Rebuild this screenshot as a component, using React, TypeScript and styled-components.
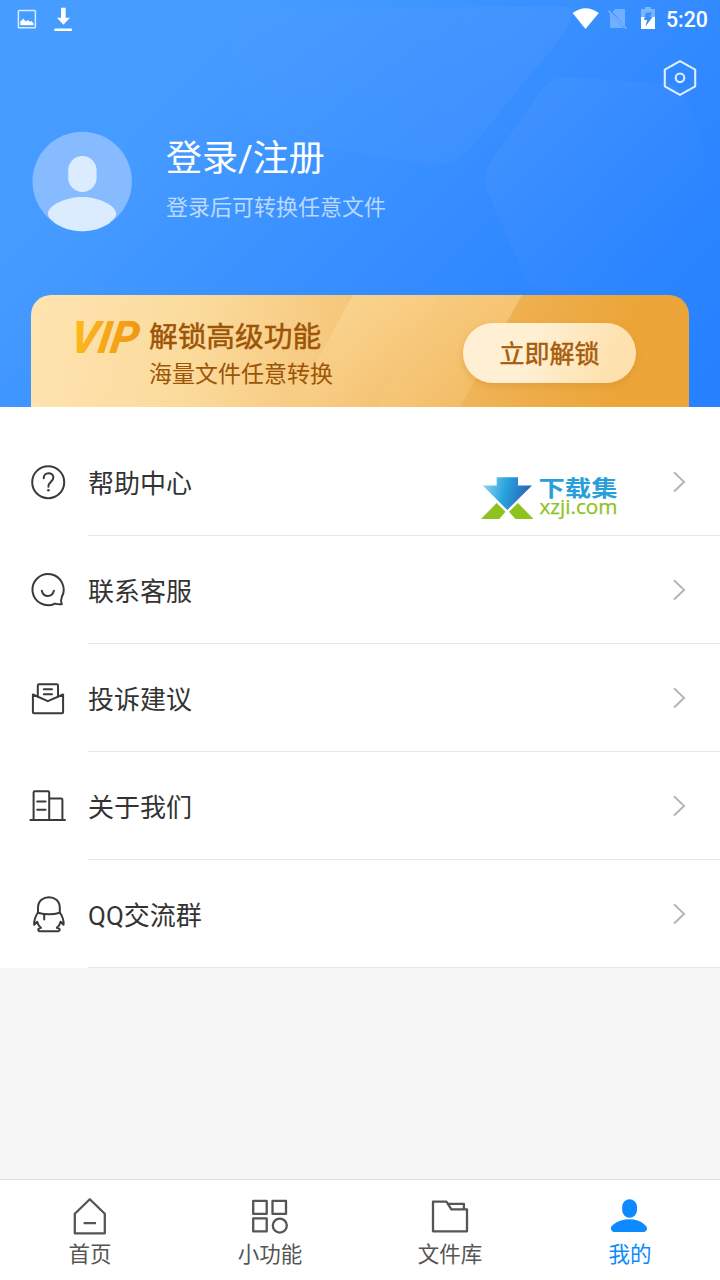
import React from "react";
import styled, { createGlobalStyle } from "styled-components";

const GlobalStyle = createGlobalStyle`
  * { box-sizing: border-box; }
  body {
    margin: 0;
    background: #f6f6f6;
    font-family: Roboto, "Noto Sans CJK SC", sans-serif;
  }
  svg { display: block; flex: none; }
`;

const Screen = styled.div`
  position: relative;
  display: flex;
  flex-direction: column;
  width: 720px;
  height: 1280px;
  overflow: hidden;
  background: #f6f6f6;
`;

const Header = styled.header`
  position: relative;
  display: flex;
  flex-direction: column;
  flex: none;
  height: 407px;
  background: linear-gradient(135deg, #469cff 0%, #459bff 25%, #3a91ff 48%, #2f88ff 70%, #2680ff 100%);
`;

const HeaderPattern = styled.svg`
  position: absolute;
  top: 0;
  left: 0;
`;

const StatusBar = styled.div`
  position: relative;
  display: flex;
  justify-content: space-between;
  height: 40px;
  padding: 0 12px 0 14px;
`;

const StatusGroup = styled.div`
  display: flex;
  align-items: center;
`;

const Clock = styled.span`
  width: 42px;
  font-size: 21.3px;
  font-weight: 500;
  line-height: 40px;
  color: #fff;
  white-space: nowrap;
`;

const Toolbar = styled.div`
  position: relative;
  display: flex;
  justify-content: flex-end;
  height: 76px;
  padding: 18px 20px 0 0;
`;

const Profile = styled.div`
  position: relative;
  display: flex;
  height: 179px;
  padding: 15px 0 0 32px;
`;

const ProfileText = styled.div`
  display: flex;
  flex-direction: column;
  padding: 2px 0 0 34px;
`;

const ProfileTitle = styled.div`
  height: 52px;
  font-size: 36px;
  line-height: 52px;
  color: #fff;
`;

const ProfileHint = styled.div`
  margin-top: 7px;
  font-size: 22px;
  line-height: 32px;
  color: rgba(255, 255, 255, 0.66);
`;

const VipCard = styled.section`
  position: relative;
  display: flex;
  height: 112px;
  margin: 0 31px;
  padding-left: 44px;
  overflow: hidden;
  border-radius: 20px 20px 0 0;
  background: linear-gradient(100deg, #ffe4b1 0%, #fbdb9c 25%, #f5c578 49%, #f1b75e 63%, #eeae4c 75%, #eba538 90%, #eba538 100%);
`;

const CardShine = styled.svg`
  position: absolute;
  top: 0;
  left: 0;
`;

const VipMark = styled.svg`
  position: relative;
  margin-top: 18px;
`;

const VipText = styled.div`
  position: relative;
  width: 320px;
  padding: 21px 0 0 6px;
  color: #9d5407;
`;

const VipTitle = styled.div`
  font-size: 28.7px;
  line-height: 42px;
  -webkit-text-stroke: 0.5px #9d5407;
`;

const VipSubtitle = styled.div`
  font-size: 23px;
  line-height: 34px;
`;

const UnlockButton = styled.button`
  position: relative;
  width: 173px;
  height: 60px;
  margin-top: 28px;
  padding: 0;
  border: 0;
  border-radius: 30px;
  background: linear-gradient(110deg, #fff0d5 0%, #ffefd3 40%, #fee1ae 85%);
  box-shadow: 0 3px 7px rgba(205, 130, 25, 0.32);
  font: 25px/63px Roboto, "Noto Sans CJK SC", sans-serif;
  color: #a75c0b;
  -webkit-text-stroke: 0.5px #a75c0b;
`;

const Menu = styled.main`
  position: relative;
  flex: none;
  padding-top: 21px;
  background: #fff;
`;

const MenuRow = styled.div`
  display: flex;
  align-items: center;
  height: 108px;
  padding-left: 28px;
`;

const MenuBody = styled.div`
  display: flex;
  align-items: center;
  justify-content: space-between;
  flex: 1;
  height: 108px;
  margin-left: 20px;
  padding-right: 32px;
  border-bottom: 1px solid #e6e6e6;
`;

const MenuLabel = styled.span`
  padding-top: 4px;
  font-size: 26px;
  line-height: 38px;
  color: #333;
`;

const Watermark = styled.svg`
  position: absolute;
  top: 66px;
  left: 478px;
`;

const TabBar = styled.nav`
  display: flex;
  flex: none;
  height: 101px;
  margin-top: auto;
  border-top: 1px solid #dedede;
  background: #fff;
`;

const Tab = styled.div<{ $active?: boolean }>`
  display: flex;
  flex: 1;
  flex-direction: column;
  align-items: center;
  padding-top: 14px;
  color: ${(p) => (p.$active ? "#0d8aff" : "#555")};
`;

const TabLabel = styled.span`
  padding-top: 1px;
  font-size: 21.5px;
  line-height: 32px;
`;

const Pattern = () => (
  <HeaderPattern width="720" height="407" viewBox="0 0 720 407">
    <defs>
      <linearGradient id="blobA" x1="1" y1="0.4" x2="0" y2="0.5">
        <stop offset="0" stopColor="#7fa8ff" stopOpacity="0.13" />
        <stop offset="1" stopColor="#7fa8ff" stopOpacity="0.03" />
      </linearGradient>
      <linearGradient id="blobB" x1="0.1" y1="0.1" x2="0.85" y2="0.7">
        <stop offset="0" stopColor="#7fa8ff" stopOpacity="0.14" />
        <stop offset="1" stopColor="#7fa8ff" stopOpacity="0" />
      </linearGradient>
    </defs>
    <path d="M225 7H573Q571 26 562 36L474 144Q456 167 428 165L280 139Q252 134 247 113Z" fill="url(#blobA)" />
    <path d="M567 77Q552 77 543 88L492 160Q482 174 487 190L523 273Q531 290 550 291H640Q720 270 720 215L698 130Q686 90 670 84Z" fill="url(#blobB)" />
  </HeaderPattern>
);

const HelpIcon = () => (
  <>
    <circle cx="20.2" cy="20.2" r="16" />
    <path d="M15.7 16.3C15.7 9.4 25.4 9.7 25.4 15.6C25.4 19.4 20.4 19.7 20.4 24.7" />
    <circle cx="20.4" cy="28.3" r="1.3" fill="#3a3a3a" stroke="none" />
  </>
);

const ServiceIcon = () => (
  <>
    <path d="M33.8 27A15.6 15.6 0 1 0 27 33.6Q30.5 34.7 33.8 34.2Q32.3 31 33.8 27Z" />
    <path d="M13.8 20.8C15.5 27.8 24 27.8 25.9 20.8" />
  </>
);

const FeedbackIcon = () => (
  <>
    <path d="M9.8 18.6V7.4Q9.8 6.2 11 6.2H28.8Q30 6.2 30 7.4V18.6" />
    <path d="M4.9 16.5L19.8 23.2L35.1 16.5V34Q35.1 35.2 33.9 35.2H6.1Q4.9 35.2 4.9 34ZM15.8 11.2H24M15.8 16.2H24" />
  </>
);

const AboutIcon = () => (
  <>
    <path d="M5.6 34V6.4Q5.6 5.2 6.8 5.2H20Q21.2 5.2 21.2 6.4V34M21.2 12.5H33.2Q34.4 12.5 34.4 13.7V34" />
    <path d="M2.4 34H37M9.2 15.4H17.6M9.2 23.8H17.6" />
  </>
);

const PenguinIcon = () => (
  <>
    <path d="M10 18.7V14C10 -0.5 31.8 -0.5 31.8 14V18.7Q21 22 10 18.7Z" />
    <path d="M9.8 18.7Q5.8 24.5 6.2 30.8L9.2 27.8Q10.2 31.8 13 33.8Q10 34.3 10.3 36Q10.5 37.3 12 37.2H30Q31.6 37.3 31.7 36Q31.7 34.3 28.8 33.8Q31.6 31.8 32.6 27.8L35.6 30.8Q36 24.5 32 18.7M16.2 20.5V25.6" />
  </>
);

const menuItems = [
  { label: "帮助中心", Icon: HelpIcon },
  { label: "联系客服", Icon: ServiceIcon },
  { label: "投诉建议", Icon: FeedbackIcon },
  { label: "关于我们", Icon: AboutIcon },
  { label: "QQ交流群", Icon: PenguinIcon },
];

const tabs = [
  {
    label: "首页",
    art: <path d="M21.8 5.2L6.8 19.8V39.3H36.8V19.8ZM15.6 29.2H28" />,
  },
  {
    label: "小功能",
    art: (
      <>
        <rect x="5.2" y="6.9" width="13.5" height="13" />
        <rect x="24.5" y="6.9" width="13.5" height="13" />
        <rect x="5.2" y="24.4" width="13.5" height="13" />
        <circle cx="31.8" cy="31.6" r="7" />
      </>
    ),
  },
  {
    label: "文件库",
    art: (
      <>
        <path d="M5 7.6H18.4L23.4 15.3H39V37.3H5Z" />
        <path d="M19.5 9.9H35.9V15" />
      </>
    ),
  },
  {
    label: "我的",
    active: true,
    art: (
      <g fill="currentColor" stroke="none">
        <rect x="14.2" y="5.3" width="14.8" height="18.4" rx="7.4" />
        <path d="M7.5 38.1C3 38.1 0.8 33.5 5.4 30.4C14.5 23.6 28.5 23.6 36.4 30.4C41 33.5 39 38.1 34.5 38.1Z" />
      </g>
    ),
  },
];

export default function App() {
  return (
    <Screen>
      <GlobalStyle />
      <Header>
        <Pattern />
        <StatusBar>
          <StatusGroup>
            <svg width="60" height="40" viewBox="14 0 60 40">
              <rect x="18.4" y="10.4" width="17" height="17.4" rx="0.8" fill="none" stroke="#fff" strokeOpacity="0.8" strokeWidth="1.5" />
              <path d="M20.3 25.3V21.5L23.3 18.7L26 21.5L28 20L30 21.8L31.5 21L33.5 23.2V25.3Z" fill="#fff" />
              <path d="M61 7.7H65.7V17.7H70L63.4 24.7L57 17.7H61ZM54.4 28.4H71.8V31H54.4Z" fill="#fff" />
            </svg>
          </StatusGroup>
          <StatusGroup>
            <svg width="96" height="40" viewBox="570 0 96 40">
              <path d="M572.6 13Q585.6 3.4 598.8 13L585.5 29Z" fill="#fff" />
              <path d="M615 9H624Q625 9 625 10V26L612.5 12ZM610 13.5L623.8 28H611Q610 28 610 27Z" fill="#fff" fillOpacity="0.3" />
              <path d="M608.5 10.8L626.5 28.8" stroke="#fff" strokeOpacity="0.35" strokeWidth="1.6" />
              <path d="M641 9H645V7H651V9H655V17H641Z" fill="#fff" fillOpacity="0.35" />
              <path d="M641 17H655V29H641Z" fill="#fff" />
              <path d="M646 12.5H652L649.8 17H652.6L645.5 26.5L647 20H644Z" fill="#3b8ffc" />
            </svg>
            <Clock>5:20</Clock>
          </StatusGroup>
        </StatusBar>
        <Toolbar>
          <svg width="40" height="40" viewBox="0 0 40 40" fill="none" stroke="#fff" strokeOpacity="0.85" strokeWidth="2.1" strokeLinejoin="round">
            <path d="M20 3.2L35.2 11.7V28.3L20 36.8L4.8 28.3V11.7Z" />
            <circle cx="20" cy="19.8" r="4.3" />
          </svg>
        </Toolbar>
        <Profile>
          <svg width="100" height="101" viewBox="0 0 100 101">
            <defs>
              <clipPath id="avatarClip"><circle cx="50.2" cy="50.5" r="49.7" /></clipPath>
            </defs>
            <circle cx="50.2" cy="50.5" r="49.7" fill="#86bbff" />
            <rect x="36.2" y="25" width="28.4" height="36" rx="14.2" fill="#dcecff" />
            <path d="M16 83C16 74 34 66 50.2 66C66 66 84.2 74 84.2 83Q84 87 78 91V101H22V91Q16 87 16 83Z" fill="#dcecff" clipPath="url(#avatarClip)" />
          </svg>
          <ProfileText>
            <ProfileTitle>登录/注册</ProfileTitle>
            <ProfileHint>登录后可转换任意文件</ProfileHint>
          </ProfileText>
        </Profile>
        <VipCard>
          <CardShine width="658" height="112" viewBox="0 0 658 112">
            <defs>
              <linearGradient id="shineA" x1="0" y1="0" x2="0" y2="1">
                <stop offset="0" stopColor="#ffdf9f" stopOpacity="0.5" />
                <stop offset="1" stopColor="#ffdf9f" stopOpacity="0.1" />
              </linearGradient>
              <linearGradient id="shineB" x1="0" y1="0" x2="0" y2="1">
                <stop offset="0" stopColor="#ffdf9f" stopOpacity="0.45" />
                <stop offset="1" stopColor="#ffdf9f" stopOpacity="0.2" />
              </linearGradient>
            </defs>
            <path d="M322 0H407L346 112H261Z" fill="url(#shineA)" />
            <path d="M407 0H491L429 112H346Z" fill="url(#shineB)" />
          </CardShine>
          <VipMark width="68" height="50" viewBox="0 0 68 50">
            <defs>
              <linearGradient id="vipFill" x1="0" y1="0" x2="1" y2="0">
                <stop offset="0" stopColor="#ffb91f" />
                <stop offset="1" stopColor="#ee9712" />
              </linearGradient>
            </defs>
            <text transform="translate(-6.5 40) skewX(-9)" fill="url(#vipFill)" fontFamily="Roboto, sans-serif" fontSize="45" fontWeight="800" fontStyle="italic" textLength="68" lengthAdjust="spacingAndGlyphs">VIP</text>
          </VipMark>
          <VipText>
            <VipTitle>解锁高级功能</VipTitle>
            <VipSubtitle>海量文件任意转换</VipSubtitle>
          </VipText>
          <UnlockButton>立即解锁</UnlockButton>
        </VipCard>
      </Header>

      <Menu>
        {menuItems.map(({ label, Icon }) => (
          <MenuRow key={label}>
            <svg width="40" height="40" viewBox="0 0 40 40" fill="none" stroke="#3a3a3a" strokeWidth="2" strokeLinecap="round" strokeLinejoin="round">
              <Icon />
            </svg>
            <MenuBody>
              <MenuLabel>{label}</MenuLabel>
              <svg width="16" height="24" viewBox="0 0 16 24" fill="none" stroke="#b5b5b5" strokeWidth="2">
                <path d="M2 2.3L12 11.9L2 21.5" />
              </svg>
            </MenuBody>
          </MenuRow>
        ))}
        <Watermark width="142" height="50" viewBox="0 0 142 50">
          <defs>
            <linearGradient id="arrowFill" x1="0" y1="0" x2="1" y2="0.15">
              <stop offset="0.05" stopColor="#8fd2ee" />
              <stop offset="0.5" stopColor="#27a3dd" />
              <stop offset="1" stopColor="#2a62b5" />
            </linearGradient>
          </defs>
          <path d="M18.7 4.2H40V12.4H54L29.3 37L4.7 12.4H18.7Z" fill="url(#arrowFill)" />
          <path d="M18.7 30L27.5 38.8L21.3 46H3ZM40 30L55.5 46H37.5L31 38.8Z" fill="#8dc21f" />
          <text x="60.5" y="23" fill="#27a0da" fontFamily="Noto Sans CJK SC, sans-serif" fontSize="22" fontWeight="700" textLength="79" lengthAdjust="spacingAndGlyphs">下载集</text>
          <text x="61.5" y="41" fill="#8dc21f" stroke="#8dc21f" strokeWidth="0.25" fontFamily="Open Sans, sans-serif" fontSize="19.5" textLength="78" lengthAdjust="spacingAndGlyphs">xzji.com</text>
        </Watermark>
      </Menu>

      <TabBar>
        {tabs.map((tab) => (
          <Tab key={tab.label} $active={tab.active}>
            <svg width="44" height="44" viewBox="0 0 44 44" fill="none" stroke="currentColor" strokeWidth="2.3" strokeLinejoin="round">
              {tab.art}
            </svg>
            <TabLabel>{tab.label}</TabLabel>
          </Tab>
        ))}
      </TabBar>
    </Screen>
  );
}
